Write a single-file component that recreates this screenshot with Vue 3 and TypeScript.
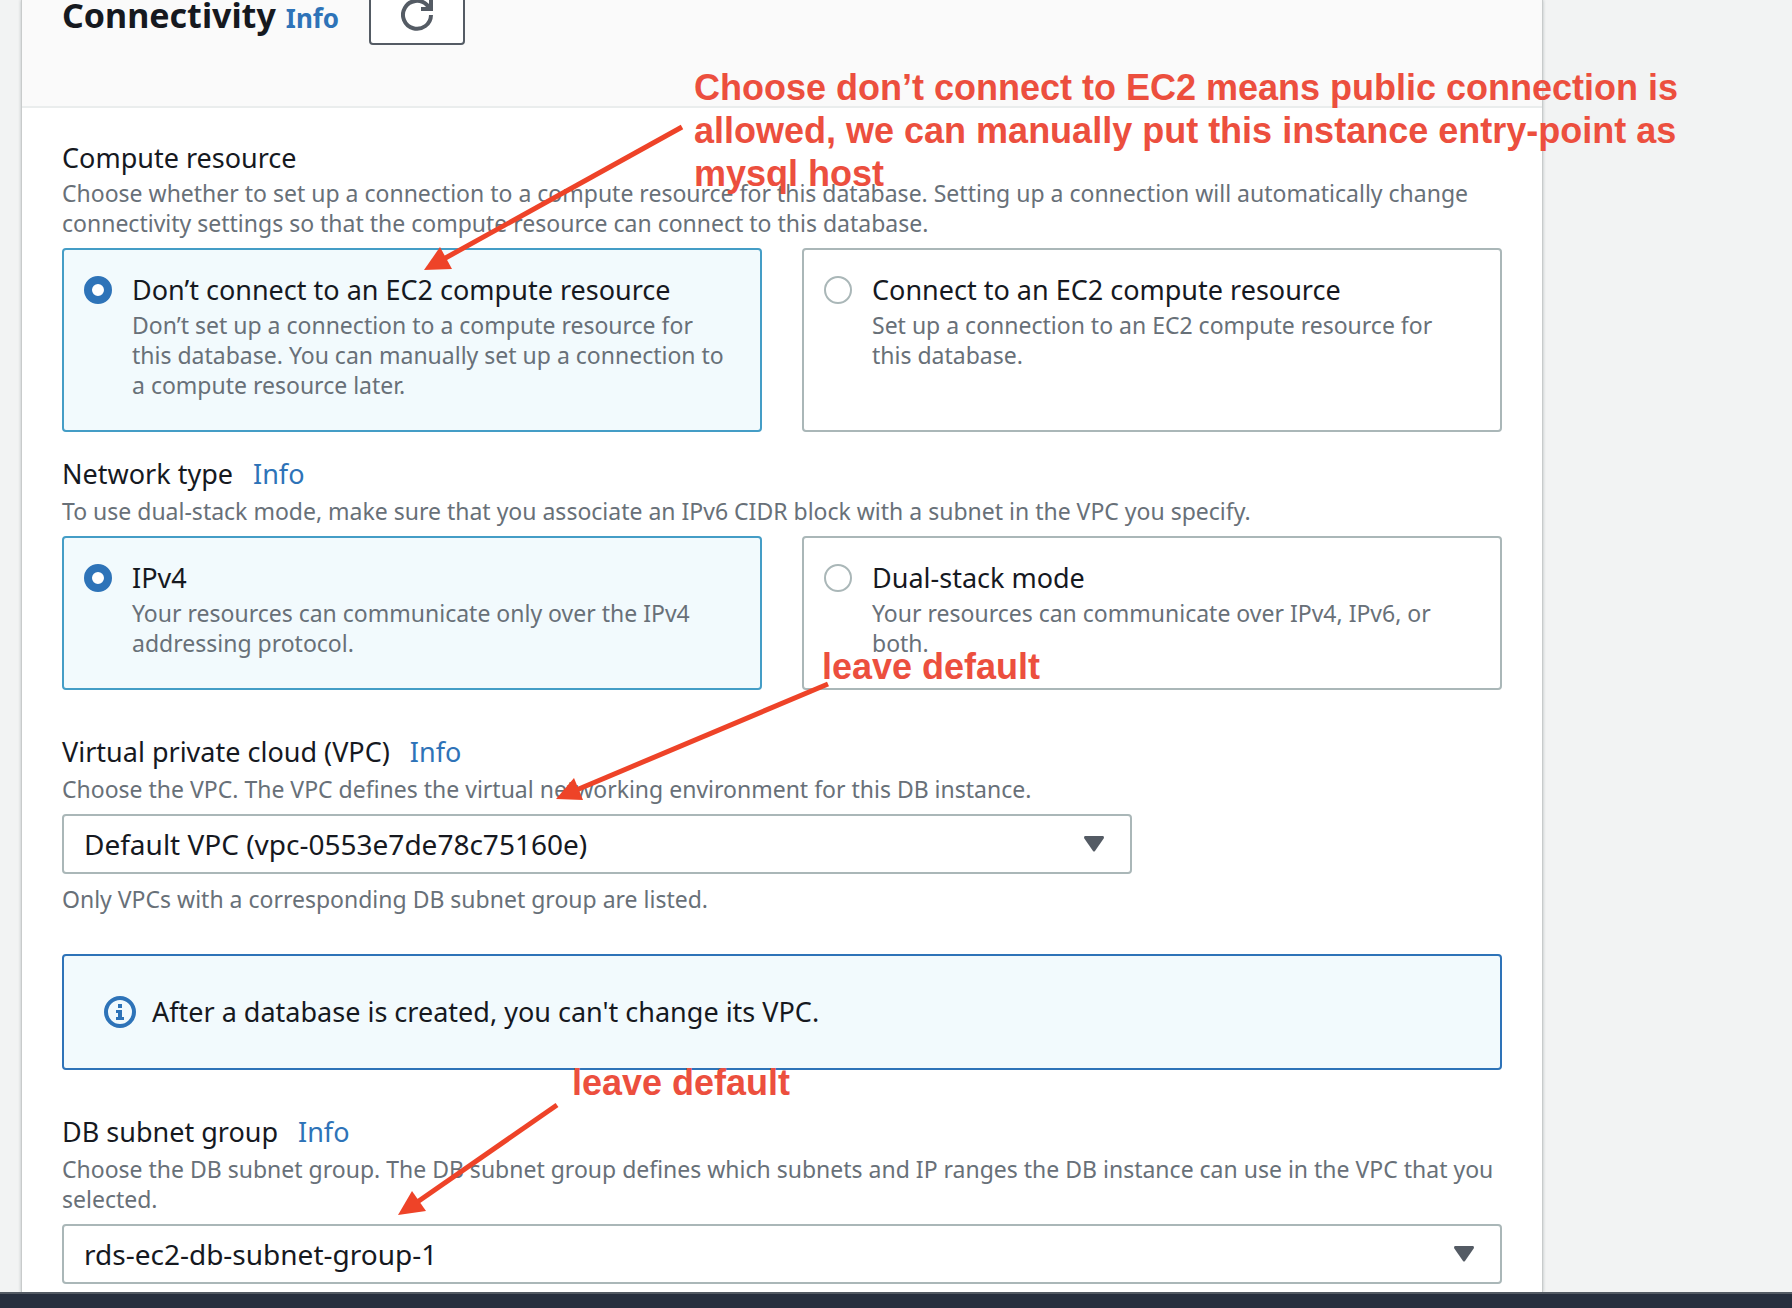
<script setup lang="ts">
import { ref } from 'vue'

interface Tile {
  value: string
  title: string
  description: string
}

interface Arrow {
  line: [number, number, number, number]
  head: string
}

const computeTiles: Tile[] = [
  {
    value: 'none',
    title: 'Don’t connect to an EC2 compute resource',
    description:
      'Don’t set up a connection to a compute resource for this database. You can manually set up a connection to a compute resource later.',
  },
  {
    value: 'ec2',
    title: 'Connect to an EC2 compute resource',
    description: 'Set up a connection to an EC2 compute resource for this database.',
  },
]

const networkTiles: Tile[] = [
  {
    value: 'ipv4',
    title: 'IPv4',
    description: 'Your resources can communicate only over the IPv4 addressing protocol.',
  },
  {
    value: 'dual',
    title: 'Dual-stack mode',
    description: 'Your resources can communicate over IPv4, IPv6, or both.',
  },
]

const arrows: Arrow[] = [
  { line: [682, 127, 440, 261], head: '424,270 440,247 452,269' },
  { line: [828, 684, 574, 791], head: '556,799 574,778 583,800' },
  { line: [557, 1105, 413, 1205], head: '398,1215 412,1191 426,1211' },
]

const compute = ref('none')
const network = ref('ipv4')
const vpc = ref('vpc-0553e7de78c75160e')
const subnetGroup = ref('rds-ec2-db-subnet-group-1')
</script>

<template>
  <div class="page">
    <main class="content">
      <section class="panel">
        <header class="panel-header">
          <div class="heading">
            <h2 class="panel-title">Connectivity</h2>
            <a href="#" class="info info-strong">Info</a>
          </div>
          <button type="button" class="refresh" aria-label="Refresh">
            <svg width="32" height="32" viewBox="0 0 32 32" fill="none" stroke="#545b64" stroke-width="4">
              <path d="M30 16a14 14 0 1 1-4-10l4 4" />
              <path d="M30 0v10H20" />
            </svg>
          </button>
        </header>

        <div class="panel-body">
          <fieldset class="field">
            <legend class="label">Compute resource</legend>
            <p class="description">
              Choose whether to set up a connection to a compute resource for this database. Setting up a
              connection will automatically change connectivity settings so that the compute resource can
              connect to this database.
            </p>
            <div class="tiles">
              <label
                v-for="tile in computeTiles"
                :key="tile.value"
                class="tile"
                :class="{ selected: compute === tile.value }"
              >
                <input v-model="compute" type="radio" name="compute" class="radio" :value="tile.value" />
                <span class="tile-text">
                  <span class="tile-title">{{ tile.title }}</span>
                  <span class="tile-description">{{ tile.description }}</span>
                </span>
              </label>
            </div>
          </fieldset>

          <fieldset class="field field-network">
            <legend class="label label-info">Network type <a href="#" class="info">Info</a></legend>
            <p class="description">
              To use dual-stack mode, make sure that you associate an IPv6 CIDR block with a subnet in the
              VPC you specify.
            </p>
            <div class="tiles">
              <label
                v-for="tile in networkTiles"
                :key="tile.value"
                class="tile"
                :class="{ selected: network === tile.value }"
              >
                <input v-model="network" type="radio" name="network" class="radio" :value="tile.value" />
                <span class="tile-text">
                  <span class="tile-title">{{ tile.title }}</span>
                  <span class="tile-description">{{ tile.description }}</span>
                </span>
              </label>
            </div>
          </fieldset>

          <div class="field field-spaced">
            <div class="label label-info">
              <label for="vpc">Virtual private cloud (VPC)</label>
              <a href="#" class="info">Info</a>
            </div>
            <p class="description">
              Choose the VPC. The VPC defines the virtual networking environment for this DB instance.
            </p>
            <div class="select-box select-narrow">
              <select id="vpc" v-model="vpc" class="select">
                <option value="vpc-0553e7de78c75160e">Default VPC (vpc-0553e7de78c75160e)</option>
              </select>
              <svg class="caret" width="20" height="16" viewBox="0 0 20 16">
                <path d="M1 0h18q1 0 1 2L11 15q-1 1-2 0L0 2Q0 0 1 0z" fill="#545b64" />
              </svg>
            </div>
            <p class="hint">Only VPCs with a corresponding DB subnet group are listed.</p>
          </div>

          <div class="alert" role="note">
            <svg width="32" height="32" viewBox="0 0 32 32" fill="#2e73b8">
              <circle cx="16" cy="16" r="14" fill="none" stroke="#2e73b8" stroke-width="4" />
              <path d="M14 8h4v4h-4zM12 14h6v7h2v3h-8v-3h2v-4h-2z" />
            </svg>
            <span>After a database is created, you can't change its VPC.</span>
          </div>

          <div class="field field-spaced">
            <div class="label label-info">
              <label for="subnet-group">DB subnet group</label>
              <a href="#" class="info">Info</a>
            </div>
            <p class="description">
              Choose the DB subnet group. The DB subnet group defines which subnets and IP ranges the DB
              instance can use in the VPC that you selected.
            </p>
            <div class="select-box">
              <select id="subnet-group" v-model="subnetGroup" class="select">
                <option value="rds-ec2-db-subnet-group-1">rds-ec2-db-subnet-group-1</option>
              </select>
              <svg class="caret" width="20" height="16" viewBox="0 0 20 16">
                <path d="M1 0h18q1 0 1 2L11 15q-1 1-2 0L0 2Q0 0 1 0z" fill="#545b64" />
              </svg>
            </div>
          </div>
        </div>
      </section>
    </main>

    <footer class="footer"></footer>

    <!-- Notes drawn on top of the form -->
    <p class="note note-compute">
      Choose don’t connect to EC2 means public connection is allowed, we can manually put this instance
      entry-point as mysql host
    </p>
    <p class="note note-vpc">leave default</p>
    <p class="note note-subnet">leave default</p>
    <svg class="arrows" width="900" height="1240" viewBox="0 0 900 1240">
      <g v-for="(arrow, i) in arrows" :key="i">
        <line
          :x1="arrow.line[0]"
          :y1="arrow.line[1]"
          :x2="arrow.line[2]"
          :y2="arrow.line[3]"
          stroke="#ee4328"
          stroke-width="5"
        />
        <polygon :points="arrow.head" fill="#ee4328" />
      </g>
    </svg>
  </div>
</template>

<style>
body {
  margin: 0;
  background: #f2f3f3;
}
</style>

<style scoped>
.page {
  position: relative;
  display: flex;
  flex-direction: column;
  min-height: 100vh;
  overflow: hidden;
  box-sizing: border-box;
  background: #f2f3f3;
  color: #16191f;
  font-family: 'Noto Sans', sans-serif;
  font-size: 27px;
  line-height: 28px;
}

.content {
  flex: 1;
  display: flex;
  padding: 0 249px 0 21px;
}

.panel {
  flex: 1;
  background: #fff;
  border: solid #c8cbcb;
  border-width: 0 1px;
  box-shadow: 0 0 3px rgba(0, 28, 36, 0.25);
}

.panel-header {
  display: flex;
  align-items: center;
  gap: 30px;
  margin-top: -16px;
  padding: 0 40px 60px;
  height: 62px;
  background: #fafafa;
  border-bottom: 2px solid #eaeded;
}

.heading {
  display: flex;
  align-items: baseline;
  gap: 10px;
}

.panel-title {
  margin: 0;
  font-size: 34px;
  line-height: 40px;
  font-weight: 700;
}

.info {
  color: #2e73b8;
  text-decoration: none;
}

.info-strong {
  font-size: 26px;
  font-weight: 700;
}

.refresh {
  display: flex;
  align-items: center;
  justify-content: center;
  width: 96px;
  height: 60px;
  margin: 0;
  padding: 0;
  background: #fff;
  border: 2px solid #545b64;
  border-radius: 4px;
}

.panel-body {
  padding: 36px 40px 8px;
}

.field {
  margin: 0;
  padding: 0;
  border: 0;
  min-width: 0;
}

.field-network {
  margin-top: 28px;
}

.field-spaced {
  margin-top: 48px;
}

.label {
  display: flex;
  gap: 20px;
  padding: 0 0 6px;
}

.label-info {
  padding-bottom: 8px;
}

.description,
.hint {
  margin: 0;
  color: #687078;
  font-size: 23px;
  line-height: 30px;
}

.description {
  margin-bottom: 10px;
}

.hint {
  margin-top: 10px;
}

.tiles {
  display: grid;
  grid-template-columns: 1fr 1fr;
  gap: 40px;
}

.tile {
  display: flex;
  gap: 20px;
  padding: 26px 28px 30px 20px;
  border: 2px solid #aab7b8;
  border-radius: 4px;
}

.tile.selected {
  background: #f2fafd;
  border-color: #449dc6;
}

.radio {
  appearance: none;
  flex: none;
  box-sizing: border-box;
  width: 28px;
  height: 28px;
  margin: 0;
  background: #fff;
  border: 2px solid #aab7b8;
  border-radius: 50%;
}

.radio:checked {
  border: 8px solid #2e73b8;
}

.tile-text {
  display: flex;
  flex-direction: column;
  gap: 6px;
}

.tile-description {
  color: #687078;
  font-size: 23px;
  line-height: 30px;
}

.select-box {
  position: relative;
}

.select-narrow {
  width: calc(75% - 10px);
}

.select {
  appearance: none;
  display: block;
  box-sizing: border-box;
  width: 100%;
  height: 60px;
  padding: 0 60px 0 20px;
  background: #fff;
  border: 2px solid #aab7b8;
  border-radius: 4px;
  color: #16191f;
  font-family: inherit;
  font-size: 28px;
  line-height: 40px;
}

.caret {
  position: absolute;
  top: 22px;
  right: 28px;
  pointer-events: none;
}

.alert {
  display: flex;
  align-items: center;
  gap: 16px;
  margin-top: 40px;
  padding: 40px;
  background: #f2fafd;
  border: 2px solid #2e73b8;
  border-radius: 4px;
}

.footer {
  height: 14px;
  background: #272f3e;
  border-top: 2px solid #545b64;
}

.note {
  position: absolute;
  margin: 0;
  color: #ec4f3e;
  font-family: 'Liberation Sans', Arial, sans-serif;
  font-size: 36px;
  line-height: 43px;
  font-weight: 700;
}

.note-compute {
  top: 66px;
  left: 694px;
  width: 1000px;
}

.note-vpc {
  top: 645px;
  left: 822px;
}

.note-subnet {
  top: 1061px;
  left: 572px;
}

.arrows {
  position: absolute;
  top: 0;
  left: 0;
  pointer-events: none;
}
</style>
